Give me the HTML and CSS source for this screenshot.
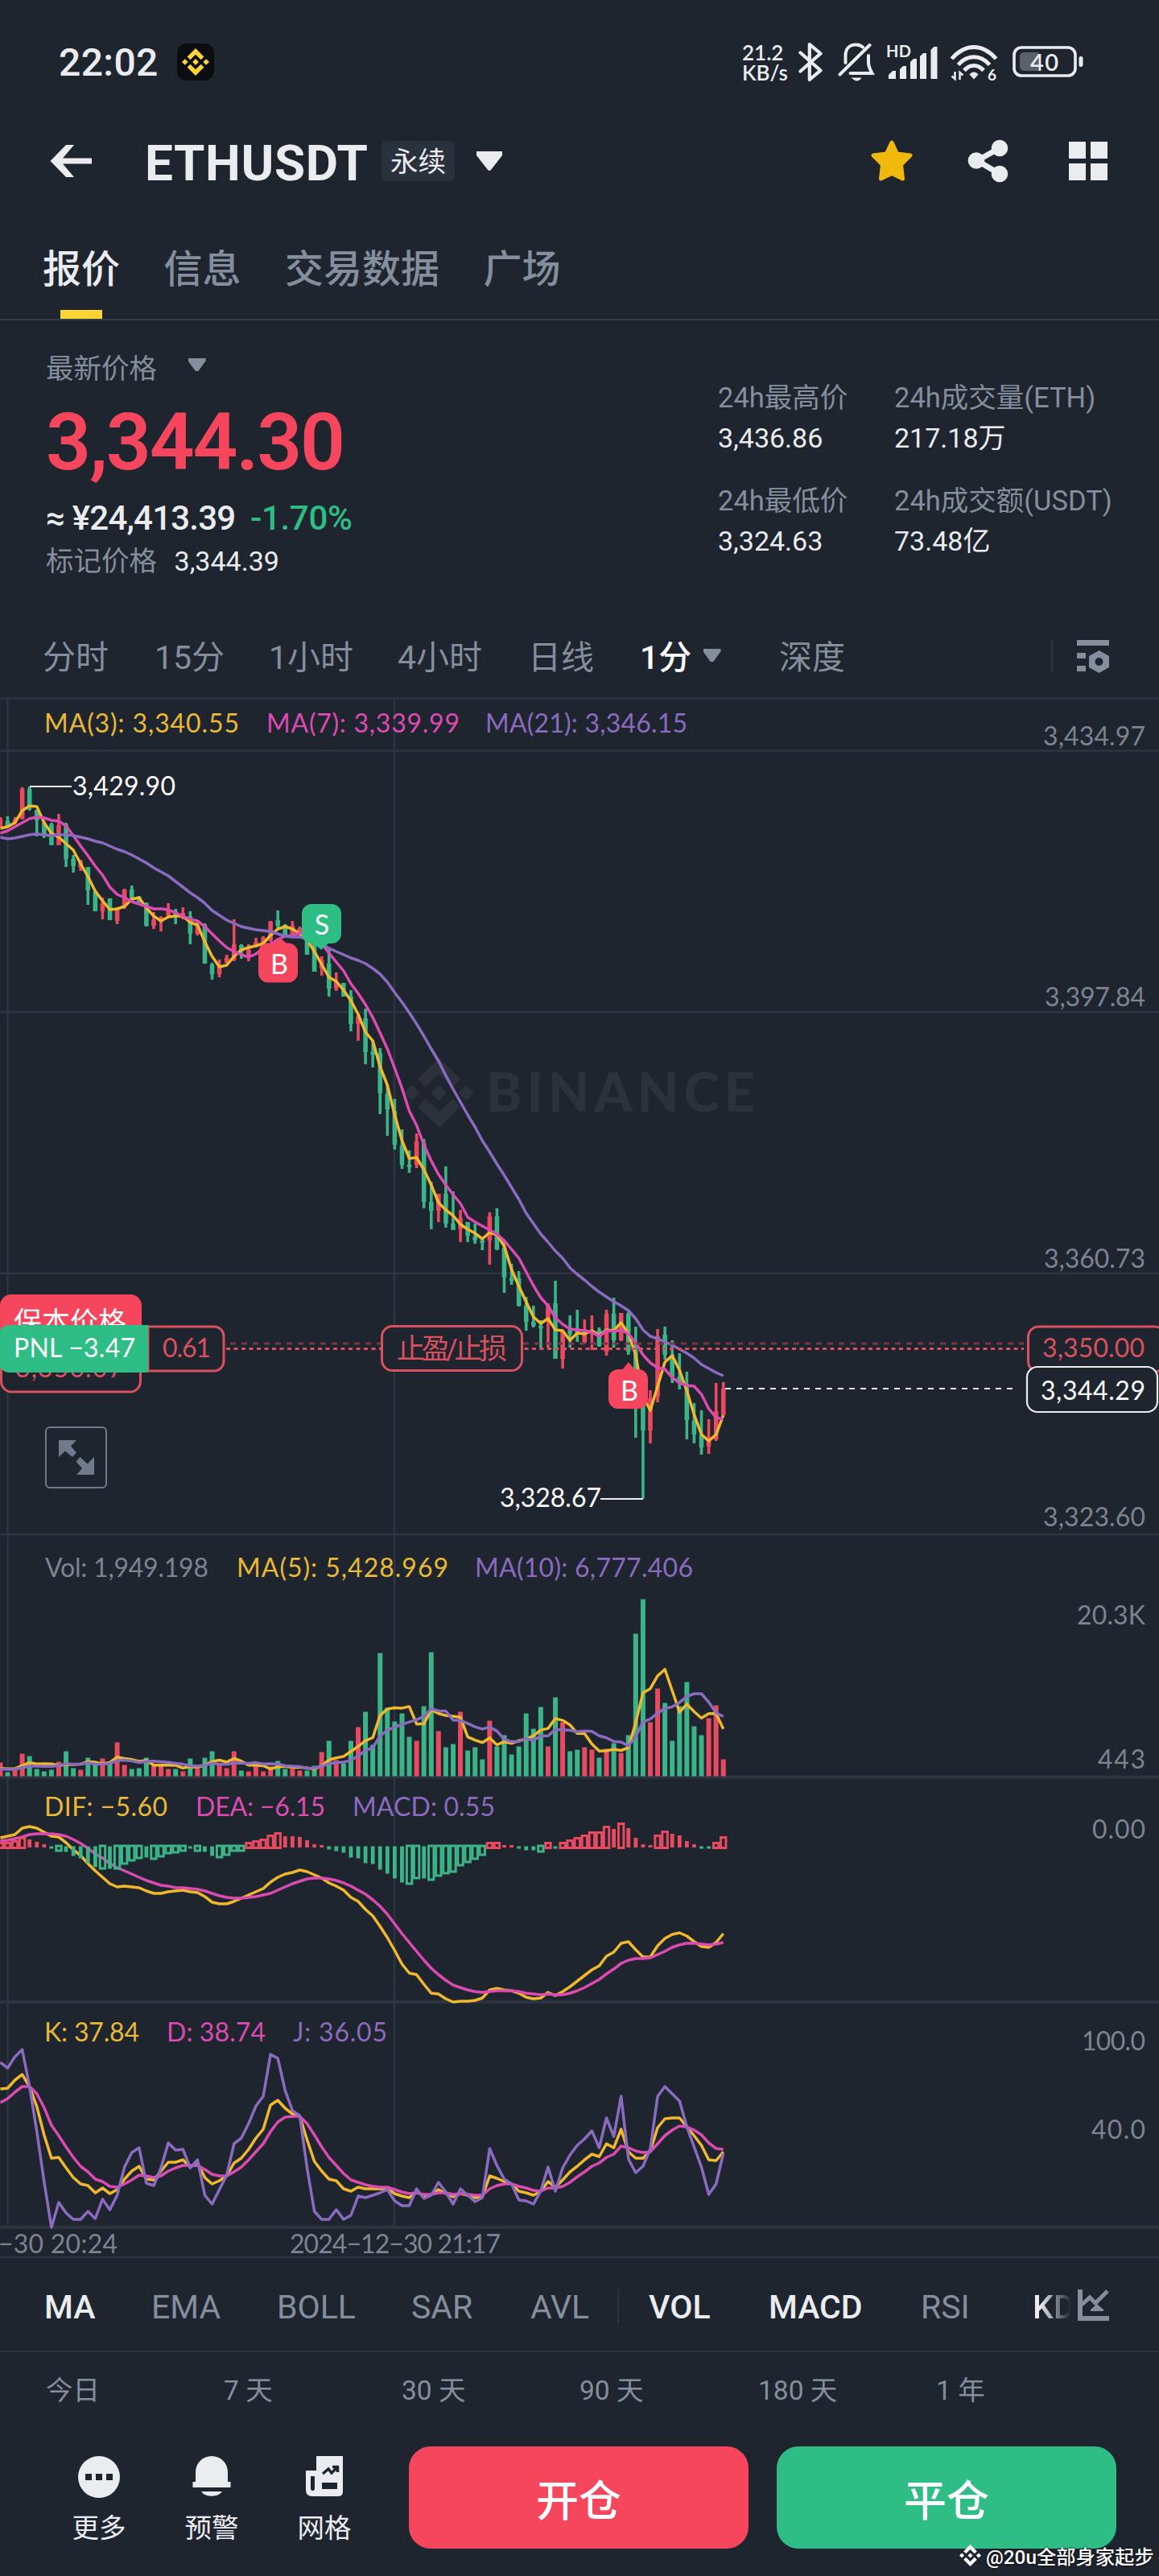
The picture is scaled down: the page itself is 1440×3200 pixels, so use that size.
FILE: index.html
```
<!DOCTYPE html>
<html lang="zh-CN">
<head>
    <meta charset="UTF-8">
    <title>ETHUSDT 永续</title>
    <link rel="stylesheet" href="styles.css">
</head>
<body>
    <!-- shared logo -->
    <svg class="defs" width="0" height="0">
        <symbol id="logo" viewBox="0 0 126.6 126.6">
            <path d="M38.7 53.2 63.3 28.6l24.6 24.6 14.3-14.3L63.3 0 24.4 38.9zM0 63.3 14.3 49l14.3 14.3-14.3 14.3zM38.7 73.4 63.3 98l24.6-24.6 14.3 14.3-38.9 38.9-38.9-38.9zM98 63.3 112.3 49l14.3 14.3-14.3 14.3zM77.8 63.3 63.3 48.8 48.8 63.3l14.5 14.5z"/>
        </symbol>
    </svg>

    <div class="status">
        <span class="clock">22:02</span>
        <span class="app"><svg width="34" height="34"><use href="#logo"/></svg></span>
        <span class="speed">21.2<br>KB/s</span>
        <svg class="bt" width="30" height="50" viewBox="0 0 30 50" fill="none" stroke="#eaecef" stroke-width="4.2" stroke-linecap="round" stroke-linejoin="round">
            <path d="M2.5 13.5 27.5 35.5 13.8 47V3l13.7 11.5L2.5 36.5"/>
        </svg>
        <svg class="mute" width="46" height="50" viewBox="0 0 46 50" fill="none" stroke="#eaecef" stroke-width="4" stroke-linecap="round">
            <path d="M2.5 40.5 39.5 4M9.5 26V17C9.500 8 15 3.500 22.500 3.500 26 3.500 28.500 4.500 31 6.500M38 17v8.500c0 5 1.500 8 4.500 13.500H15.500"/>
            <path d="M18 45h11c-1.500 2-3.500 3-5.500 3s-4-1-5.500-3z" fill="#eaecef" stroke-width="1"/>
        </svg>
        <svg class="signal" width="66" height="50" viewBox="0 -4 66 50" fill="#eaecef">
            <text x="0" y="15" font-size="20" font-weight="700" textLength="31">HD</text>
            <path d="M3 42v-5l5-5h4v10zM17 42V30l4-4h4v16zM30 42V21l4-4h4v25zM42 42V14l4-4h4v32zM55.500 42V6l4-4h4v40z"/>
        </svg>
        <svg class="wifi" width="62" height="48" viewBox="0 0 62 48" fill="none" stroke="#eaecef" stroke-width="5">
            <path d="M2.500 18C19-1.500 41-1.500 57.500 18M10.500 25.500C21.500 12.500 38.500 12.500 49.500 25.500M18 32.500c7-8 17-8 24 0"/>
            <path d="M24.500 37.500c3-4 8-4 11 0L30 43.500z" fill="#eaecef" stroke="none"/>
            <path d="M6.500 34v9l-4-3.500M12.500 44v-9l4 3.500" stroke-width="2.500"/>
            <text x="47" y="45" font-size="19" font-weight="700" fill="#eaecef" stroke="none">6</text>
        </svg>
        <svg class="battery" width="90" height="40" viewBox="0 0 90 40">
            <rect x="2" y="2" width="76" height="35" rx="9" fill="none" stroke="#eaecef" stroke-width="3.600"/>
            <path d="M14 8h18v23H14a5 5 0 0 1-5-5V13a5 5 0 0 1 5-5z" fill="#5c6068"/>
            <rect x="82.500" y="13" width="5" height="13" rx="2.500" fill="#eaecef"/>
            <text x="22" y="31" font-size="29" font-weight="600" fill="#eaecef" textLength="35">40</text>
        </svg>
    </div>

    <div class="title">
        <svg width="54" height="44" viewBox="0 0 54 44" fill="#eaecef"><path d="M21 2h10L17 18.500h36v7H17L31 42H21L1.500 22z"/></svg>
        <h1>ETHUSDT</h1>
        <span class="tag">永续</span>
        <svg class="caret" width="34" height="26" viewBox="0 0 34 26"><path d="M1 1h32v5L19 24q-2 2-4 0L1 6z" fill="#eaecef"/></svg>
        <svg class="star" width="54" height="54" viewBox="0 0 54 54"><path d="m27 4 6.500 14 16.500 2-11.500 11.500 2 17.500L27 42.500 13.500 49l2-17.500L4 20l16.500-2z" fill="#f0b90b" stroke="#f0b90b" stroke-width="5" stroke-linejoin="round"/></svg>
        <svg class="share" width="52" height="54" viewBox="0 0 52 54"><path d="M40 11 12 26.500 40 43" fill="none" stroke="#eaecef" stroke-width="7"/><g fill="#eaecef"><circle cx="40" cy="11" r="10.300"/><circle cx="11" cy="26.500" r="10.300"/><circle cx="40" cy="43" r="10.300"/></g></svg>
        <svg width="48" height="48" viewBox="0 0 48 48"><path d="M0 0h21v21H0zM27 0h21v21H27zM0 27h21v21H0zM27 27h21v21H27z" fill="#eaecef"/></svg>
    </div>

    <div class="tabs">
        <span class="active">报价</span>
        <span>信息</span>
        <span>交易数据</span>
        <span>广场</span>
    </div>

    <div class="ticker">
        <div class="price">
            <div class="label">最新价格 <i class="tri"></i></div>
            <div class="last">3,344.30</div>
            <div class="fiat">≈ ¥24,413.39 <b>-1.70%</b></div>
            <div class="mark">标记价格 <b>3,344.39</b></div>
        </div>
        <div class="stats">
            <div><p>24h最高价</p><b>3,436.86</b></div>
            <div><p>24h成交量(ETH)</p><b>217.18万</b></div>
            <div><p>24h最低价</p><b>3,324.63</b></div>
            <div><p>24h成交额(USDT)</p><b>73.48亿</b></div>
        </div>
    </div>

    <div class="intervals">
        <span>分时</span>
        <span>15分</span>
        <span>1小时</span>
        <span>4小时</span>
        <span>日线</span>
        <span class="active">1分 <i class="tri"></i></span>
        <span>深度</span>
        <svg width="74" height="44" viewBox="0 0 74 44" fill="#848e9c">
            <path d="M1 1h2v42H1z" fill="#2f3640"/>
            <path d="M33 2h40v7H33zM33 18h11v7H33zM33 34h11v7H33z"/>
            <path fill-rule="evenodd" d="m60.500 15 12.500 7v14l-12.500 7L48 36V22zm0 9a5 5 0 1 0 0 10 5 5 0 0 0 0-10z"/>
        </svg>
    </div>

    <svg id="chart" class="chart" width="1440" height="1940" viewBox="0 866 1440 1940">
        <g class="watermark">
            <use href="#logo" x="502" y="1314" width="87" height="87"/>
            <text x="604" y="1381" textLength="334">BINANCE</text>
        </g>
        <g class="grid">
            <path d="M0 867.500H1440M0 932.700H1440M0 1257.300H1440M0 1581.700H1440M0 1906H1440M9.500 867V2766M490 867V2766M0 2804H1440"/>
            <path d="M0 2207.500H1440M0 2486.700H1440M0 2766.700H1440" stroke-width="4"/>
        </g>
        <g id="plot"></g>

        <g class="legend">
            <text class="c1" x="55" y="909.500" textLength="242">MA(3): 3,340.55</text>
            <text class="c2" x="331" y="909.500" textLength="240">MA(7): 3,339.99</text>
            <text class="c3" x="603" y="909.500" textLength="251">MA(21): 3,346.15</text>
            <text class="dim" x="56" y="1959" textLength="203">Vol: 1,949.198</text>
            <text class="c1" x="294" y="1959" textLength="263">MA(5): 5,428.969</text>
            <text class="c3" x="590" y="1959" textLength="271">MA(10): 6,777.406</text>
            <text class="c1" x="55" y="2256" textLength="153">DIF: −5.60</text>
            <text class="c2" x="243" y="2256" textLength="161">DEA: −6.15</text>
            <text class="c3" x="438" y="2256" textLength="177">MACD: 0.55</text>
            <text class="c1" x="55" y="2536" textLength="118">K: 37.84</text>
            <text class="c2" x="207" y="2536" textLength="123">D: 38.74</text>
            <text class="c3" x="364" y="2536" textLength="117">J: 36.05</text>
        </g>
        <g class="axis">
            <text x="1296" y="926" textLength="127">3,434.97</text>
            <text x="1298" y="1250" textLength="125">3,397.84</text>
            <text x="1297" y="1575" textLength="126">3,360.73</text>
            <text x="1296" y="1896" textLength="127">3,323.60</text>
            <text x="1338" y="2018" textLength="85">20.3K</text>
            <text x="1364" y="2197" textLength="59">443</text>
            <text x="1357" y="2284" textLength="66">0.00</text>
            <text x="1344" y="2547" textLength="79">100.0</text>
            <text x="1356" y="2657" textLength="67">40.0</text>
            <text x="-2" y="2799" textLength="148">−30 20:24</text>
            <text x="360" y="2799" textLength="262">2024−12−30 21:17</text>
        </g>

        <path d="M37 977H89M746 1862H799" stroke="#eaecef" stroke-width="2"/>
        <text class="white" x="90" y="988" textLength="128">3,429.90</text>
        <text class="white" x="621" y="1872" textLength="126">3,328.67</text>

        <!-- order lines -->
        <path d="M286 1669H1272" stroke="#7a3743" stroke-width="3" stroke-dasharray="7 7"/>
        <path d="M281 1675.500H1272" stroke="#d9515f" stroke-width="3" stroke-dasharray="5 4.500"/>
        <path d="M901 1725H1262" stroke="#eaecef" stroke-width="2" stroke-dasharray="7 7"/>

        <!-- trade marks -->
        <path d="M348 1165l9 8h-18zM781 1692l10 12h-20z" fill="#f6465d"/>
        <rect x="321" y="1171.500" width="49" height="49" rx="12" fill="#f6465d"/>
        <rect x="756" y="1701" width="49" height="49" rx="12" fill="#f6465d"/>
        <path d="M399 1180l10-9h-20z" fill="#2ebd85"/>
        <rect x="375" y="1123" width="49" height="49" rx="12" fill="#2ebd85"/>
        <g class="mark-text">
            <text x="347" y="1210">B</text>
            <text x="782" y="1740">B</text>
            <text x="400" y="1161">S</text>
        </g>

        <!-- position tags -->
        <rect x="1.500" y="1660" width="173" height="69" rx="13" fill="#1f252f" stroke="#d9515f" stroke-width="3"/>
        <text class="red" x="19" y="1711" textLength="134">3,350.07</text>
        <path d="M0 1670V1622a14 14 0 0 1 14-14H162a14 14 0 0 1 14 14V1670z" fill="#f6465d"/>
        <text class="white cjk" x="17" y="1655">保本价格</text>
        <path d="M184 1648H266a12 12 0 0 1 12 12V1691a12 12 0 0 1-12 12H184z" fill="#1f252f" stroke="#d9515f" stroke-width="3"/>
        <path d="M184 1646V1705H12a14 14 0 0 1-14-14V1660a14 14 0 0 1 14-14z" fill="#2ebd85"/>
        <text class="white" x="17" y="1686" textLength="151">PNL −3.47</text>
        <text class="red" x="202" y="1686" textLength="60">0.61</text>
        <rect x="474.500" y="1647.500" width="174" height="55" rx="13" fill="#1f252f" stroke="#d9515f" stroke-width="3"/>
        <text class="red cjk" x="493" y="1688" textLength="137">止盈/止损</text>
        <rect x="1277.500" y="1648" width="170" height="56" rx="13" fill="#1f252f" stroke="#d9515f" stroke-width="3"/>
        <text class="red" x="1295" y="1686" textLength="127">3,350.00</text>
        <rect x="1276" y="1698" width="162" height="56" rx="13" fill="#1f252f" stroke="#eaecef" stroke-width="2.200"/>
        <text class="white" x="1293" y="1739" textLength="130">3,344.29</text>

        <!-- fullscreen button -->
        <rect x="57" y="1773" width="75" height="75" rx="5" fill="#1f252f" stroke="#707a8a" stroke-width="2"/>
        <path d="M73 1789H95L88 1796.500 95 1804.500 90 1810 81 1802.500 73 1810zM117 1832H95L102 1824 94.500 1815.500 99.500 1810 108.500 1818.500 117 1810z" fill="#707a8a"/>
    </svg>

    <div class="indicators">
        <span class="active">MA</span>
        <span>EMA</span>
        <span>BOLL</span>
        <span>SAR</span>
        <span>AVL</span>
        <span class="active vol">VOL</span>
        <span class="active">MACD</span>
        <span>RSI</span>
        <span class="active kdj">KDJ</span>
        <svg width="40" height="40" viewBox="0 0 40 40" fill="none" stroke="#848e9c">
            <path d="M3 0v36h36" stroke-width="6"/>
            <path d="m5 19 10-9 7 7L37 2" stroke-width="5"/>
            <path d="m16 25 8-7 8 7v2H16z" fill="#848e9c" stroke="none"/>
        </svg>
    </div>

    <div class="ranges">
        <span>今日</span>
        <span>7 天</span>
        <span>30 天</span>
        <span>90 天</span>
        <span>180 天</span>
        <span>1 年</span>
    </div>

    <div class="actions">
        <div class="tool">
            <svg width="54" height="54" viewBox="0 0 54 54"><circle cx="27" cy="27" r="26" fill="#eaecef"/><path d="M10 23h8v8h-8zM23 23h8v8h-8zM36 23h8v8h-8z" fill="#1f252f"/></svg>
            更多
        </div>
        <div class="tool">
            <svg width="54" height="54" viewBox="0 0 54 54" fill="#eaecef"><path d="M7 21a20 20 0 0 1 40 0v12l3.500 0v7h-47v-7H7zM14 45h26a14 9 0 0 1-26 0z"/></svg>
            预警
        </div>
        <div class="tool">
            <svg width="54" height="54" viewBox="0 0 54 54"><path d="M17 1h33v44q0 6-6 6H12q-8 0-8-8V19h13z" fill="#eaecef"/><path d="M10 26h5v15q0 3-2.500 3T10 41zM24 34h19v8H24z" fill="#1f252f"/><path d="m25 23 7-6 4 5 8-8M37 14.500h6.500V21" fill="none" stroke="#1f252f" stroke-width="3.500"/></svg>
            网格
        </div>
        <button class="open">开仓</button>
        <button class="close">平仓</button>
        <div class="credit"><svg width="27" height="27"><use href="#logo"/></svg>@20u全部身家起步</div>
    </div>
    <script src="chart.js"></script>
</body>
</html>
```
FILE: styles.css
```
* {
    box-sizing: border-box;
}

body {
    margin: 0;
    width: 1440px;
    height: 3200px;
    overflow: hidden;
    background: #1f252f;
    color: #eaecef;
    font-family: Roboto, "Noto Sans CJK SC", sans-serif;
}

svg {
    display: block;
    flex: none;
}

.defs {
    position: absolute;
}

/* status bar */
.status {
    display: flex;
    align-items: center;
    height: 154px;
    padding-left: 73px;
}

.status text {
    font-family: Lato, sans-serif;
}

.clock {
    width: 147px;
    font-size: 48px;
    font-weight: 500;
    letter-spacing: 0.4px;
}

.app {
    display: flex;
    align-items: center;
    justify-content: center;
    width: 46px;
    height: 46px;
    border-radius: 12px;
    background: #0b0d10;
    fill: #fcd535;
}

.speed {
    width: 68px;
    margin: 2px 0 0 656px;
    font: 600 26px/25px Lato, sans-serif;
    white-space: nowrap;
}

.bt {
    margin-left: 2px;
}

.mute {
    margin-left: 19px;
}

.signal {
    margin-left: 14px;
    margin-top: 0;
}

.wifi {
    margin-left: 13px;
    margin-top: 3px;
}

.battery {
    margin-left: 16px;
}

/* pair title */
.title {
    display: flex;
    align-items: center;
    height: 92px;
    padding: 0 64px 0 61px;
}

.title h1 {
    margin: 6px 0 0 65px;
    width: 294px;
    font-size: 62px;
    font-weight: 700;
    line-height: 80px;
    letter-spacing: 0.6px;
}

.tag {
    width: 91px;
    height: 50px;
    border-radius: 6px;
    background: #29313c;
    font-size: 34.500px;
    line-height: 52px;
    text-align: center;
}

.caret {
    margin-left: 26px;
}

.star {
    margin-left: auto;
}

.share {
    margin: 0 74px 0 67px;
}

.tabs {
    display: flex;
    gap: 54.500px;
    height: 152px;
    padding: 60px 53px 0;
    border-bottom: 2px solid #333b47;
    color: #848e9c;
    font-size: 48px;
    font-weight: 500;
    line-height: 58px;
}

.tabs .active {
    position: relative;
    color: #eaecef;
}

.tabs .active::after {
    content: "";
    position: absolute;
    left: 22px;
    bottom: 0;
    width: 52px;
    height: 11px;
    background: #fcd535;
}

.tri {
    display: inline-block;
    width: 22px;
    height: 16px;
    background: #848e9c;
    clip-path: polygon(0 0, 100% 0, 100% 20%, 58% 100%, 42% 100%, 0 20%);
}

/* prices */
.ticker {
    display: flex;
    justify-content: space-between;
    height: 354px;
    padding: 0 0 0 57px;
    color: #848e9c;
    font-size: 34.500px;
}

.ticker b {
    color: #eaecef;
    font-weight: 400;
}

.label {
    margin-top: 34px;
    height: 52px;
    line-height: 52px;
}

.label .tri {
    margin: 0 0 9px 30px;
}

.last {
    height: 130px;
    color: #f6465d;
    font-size: 98px;
    font-weight: 600;
    line-height: 132px;
    letter-spacing: -2.100px;
}

.fiat {
    height: 56px;
    color: #eaecef;
    font-size: 42px;
    font-weight: 500;
    line-height: 60px;
    letter-spacing: -0.800px;
}

.ticker .fiat b {
    margin-left: 9px;
    color: #2ebd85;
    font-weight: 500;
    letter-spacing: -0.300px;
}

.mark {
    line-height: 54px;
}

.mark b {
    margin-left: 13px;
    font-size: 34px;
}

.stats {
    display: grid;
    grid-template-columns: 219px 329px;
    grid-template-rows: 128px 128px;
    margin-top: 70px;
}

.stats p {
    margin: 0;
    line-height: 52px;
    white-space: nowrap;
}

.stats b {
    font-size: 34px;
    line-height: 48px;
}

.intervals {
    display: grid;
    grid-template-columns: 139px 142px 160px 162px 139px 173px 335px 74px;
    align-items: center;
    height: 114px;
    padding: 16px 0 0 53px;
    color: #848e9c;
    font-size: 41px;
    line-height: 60px;
}

.intervals svg {
    margin: -4px 0 0 2px;
}

.intervals .active {
    color: #fff;
    font-weight: 500;
}

.intervals .tri {
    margin: 0 0 9px 4px;
}

/* chart */
.chart {
    font-family: Lato, sans-serif;
    font-size: 32px;
}

.grid path {
    fill: none;
    stroke: #2e3540;
}

.grid path:first-child {
    stroke-width: 2.500;
}

.watermark {
    fill: #2c313c;
    font-size: 67px;
    font-weight: 900;
}

.up { fill: #e94a5f; }
.down { fill: #3bb488; }

.hollow {
    fill: none;
    stroke-width: 3;
}

.hollow.up { stroke: #e94a5f; }
.hollow.down { stroke: #3bb488; }

.line {
    fill: none;
    stroke-width: 3.500;
    stroke-linejoin: round;
}

.line.c1 { stroke: #f0b92d; }
.line.c2 { stroke: #dc4bb2; }
.line.c3 { stroke: #8a6bbf; }

.legend .c1 { fill: #e8b936; }
.legend .c2 { fill: #dc4bb2; }
.legend .c3 { fill: #8a6bbf; }
.legend .dim,
.axis { fill: #7d8390; }

.white { fill: #fff; }
.red { fill: #d9515f; }

.cjk {
    font-family: Roboto, "Noto Sans CJK SC", sans-serif;
    font-size: 35px;
}

.mark-text {
    fill: #fff;
    font-size: 34px;
    text-anchor: middle;
}

/* indicator picker */
.indicators {
    display: grid;
    grid-template-columns: 133px 156px 167px 148px 147px 149px 189px 139px 55px 40px;
    align-items: center;
    height: 116px;
    padding: 6px 0 0 55px;
    border-bottom: 2px solid #2c343f;
    color: #848e9c;
    font-size: 41px;
}

.indicators svg {
    margin: -4px 0 0 1px;
}

.indicators .active {
    color: #eaecef;
    font-weight: 500;
}

.vol {
    position: relative;
}

.vol::before {
    content: "";
    position: absolute;
    left: -39px;
    top: 2px;
    width: 2px;
    height: 42px;
    background: #2c343f;
}

.kdj {
    width: 48px;
    overflow: hidden;
    -webkit-mask-image: linear-gradient(90deg, #000 20%, transparent);
    mask-image: linear-gradient(90deg, #000 20%, transparent);
}

.ranges {
    display: grid;
    grid-template-columns: 221px 221px 221px 222px 221px auto;
    height: 98px;
    padding-left: 57px;
    color: #848e9c;
    font-size: 33.500px;
    line-height: 96px;
}

/* bottom bar */
.actions {
    position: relative;
    display: flex;
    align-items: flex-start;
    height: 180px;
    padding: 19px 0 0 53px;
}

.tool {
    display: flex;
    flex-direction: column;
    align-items: center;
    gap: 12px;
    width: 140px;
    padding-top: 11px;
    font-size: 33.500px;
    line-height: 50px;
}

.actions button {
    width: 422px;
    height: 127px;
    margin-left: 35px;
    border: 0;
    border-radius: 27px;
    color: #fff;
    font: 500 53px/130px Roboto, "Noto Sans CJK SC", sans-serif;
    padding: 4px 0 0;
}

.open { background: #f6465d; }
.actions .close { background: #2ebd85; }

.credit {
    position: absolute;
    left: 1192px;
    top: 137px;
    display: flex;
    align-items: center;
    gap: 6px;
    color: #fff;
    fill: #fff;
    font-size: 24.300px;
    font-weight: 500;
    white-space: nowrap;
    text-shadow: 0 0 3px #000;
}
```
FILE: chart.js
```
const STEP = 9.074;
const plot = document.getElementById("plot");
const xAt = (i) => 0.4 + i * STEP;

// colour, high, body top, body bottom, low (svg units)
const candles = `
r 1015 1017 1027 1027,g 1014 1020 1027 1027,r 1015 1018 1022 1024,r 978 980 1017 1018,g 977 980 1005 1007,
g 1006 1006 1019 1039,g 1020 1022 1039 1041,g 1022 1024 1050 1050,r 1011 1025 1050 1050,g 1022 1024 1067 1077,
g 1062 1067 1076 1084,r 1068 1070 1078 1082,g 1077 1077 1106 1124,g 1107 1107 1132 1132,r 1115 1122 1132 1142,
g 1116 1116 1143 1143,r 1127 1129 1144 1148,r 1104 1105 1125 1129,g 1100 1105 1116 1118,g 1113 1114 1121 1121,
g 1121 1122 1150 1151,r 1133 1143 1150 1154,r 1138 1140 1145 1157,r 1122 1130 1137 1138,g 1129 1132 1138 1148,
r 1127 1134 1140 1142,g 1132 1138 1160 1173,r 1145 1150 1160 1162,g 1147 1149 1197 1197,g 1196 1198 1210 1217,
r 1192 1199 1210 1214,r 1186 1190 1196 1197,r 1142 1173 1192 1194,g 1173 1174 1182 1191,r 1173 1180 1188 1194,
r 1165 1170 1176 1177,r 1163 1165 1172 1173,r 1144 1145 1168 1170,g 1131 1143 1150 1153,g 1148 1149 1163 1163,
r 1144 1150 1160 1162,r 1151 1153 1160 1160,g 1162 1164 1186 1186,g 1168 1170 1207 1207,r 1188 1193 1203 1212,
g 1180 1197 1228 1238,r 1208 1220 1228 1231,g 1221 1221 1238 1238,g 1230 1238 1272 1281,r 1260 1263 1272 1293,
g 1253 1265 1307 1322,g 1293 1307 1310 1326,g 1302 1308 1358 1384,g 1347 1359 1378 1411,g 1365 1380 1422 1428,
g 1403 1423 1447 1452,g 1429 1447 1450 1457,r 1408 1418 1447 1451,g 1415 1420 1493 1501,g 1468 1493 1504 1527,
r 1483 1483 1504 1518,g 1449 1483 1520 1525,g 1480 1520 1528 1528,r 1503 1513 1527 1543,g 1518 1518 1535 1543,
g 1520 1536 1541 1545,g 1538 1541 1544 1553,r 1506 1511 1541 1571,g 1501 1511 1552 1553,g 1543 1550 1587 1606,
g 1570 1588 1591 1596,g 1579 1588 1622 1623,g 1611 1622 1642 1653,g 1622 1642 1647 1649,g 1640 1647 1650 1675,
r 1619 1622 1640 1674,g 1591 1619 1688 1688,r 1652 1654 1688 1700,g 1634 1652 1657 1674,g 1627 1653 1657 1667,
r 1639 1655 1667 1669,r 1634 1653 1657 1677,g 1649 1652 1672 1673,r 1627 1632 1679 1684,g 1612 1632 1665 1674,
r 1631 1631 1665 1666,g 1630 1632 1679 1683,g 1648 1677 1747 1786,g 1710 1713 1777 1862,r 1727 1737 1777 1793,
r 1651 1660 1735 1742,g 1648 1658 1683 1689,g 1665 1683 1710 1718,g 1681 1710 1717 1726,g 1704 1722 1764 1788,
g 1743 1765 1782 1793,g 1752 1782 1798 1807,r 1763 1785 1797 1806,r 1718 1753 1788 1790,r 1717 1725 1758 1758
`.trim().split(",").map((row) => {
    const [color, ...v] = row.trim().split(" ");
    return [color === "r" ? "up" : "down", ...v.map(Number)];
});

const volumes = [
    17, 5, 9, 28, 25, 9, 6, 8, 18, 31, 10, 8, 23, 15, 22, 17, 42, 14, 9, 10, 23, 13, 14, 9, 9,
    6, 22, 9, 23, 31, 15, 10, 31, 7, 6, 15, 6, 12, 19, 9, 9, 7, 7, 13, 30, 44, 20, 16, 44, 61,
    80, 39, 153, 85, 68, 78, 49, 44, 87, 154, 56, 36, 40, 80, 32, 36, 21, 69, 37, 51, 27, 37, 78, 59, 86,
    37, 98, 67, 31, 33, 36, 33, 23, 34, 41, 29, 51, 177, 220, 67, 109, 91, 44, 87, 117, 62, 51, 72, 88, 21
];

const macd = [
    5, 5, 7, 11, 10, 7, 4, -3, -5, -7, -12, -15, -21, -26, -27, -28, -27, -21, -17, -14, -14, -15, -12, -8, -7,
    -5, -3, -5, -7, -12, -13, -10, -5, -5, 5, 7, 9, 14, 17, 14, 14, 13, 9, 4, 3, -4, -6, -8, -14, -15,
    -21, -22, -29, -34, -40, -45, -46, -39, -40, -41, -36, -33, -31, -23, -19, -15, -10, 5, 5, 3, 3, -3, -5, -5, -6,
    5, -3, 5, 8, 11, 14, 18, 18, 25, 23, 29, 24, 12, 4, 3, 14, 19, 17, 15, 8, 4, -3, -3, 5, 12
];
// H = hollow bar, F = filled bar
const macdStyle = "HHHHFFFFHFFFFFHFHHHHFHHHHHFHFFHHHHHHHHHFFFFFFFFFFFFFFFFFHHFHHHHHHHHHHFFFFFHHFHHHHHHHFHFFFFHHFFFFFFHH";

const ma3 = [
    1029, 1027, 1022, 1007, 1001, 1002, 1022, 1035, 1040, 1048, 1056, 1073, 1089, 1107, 1119, 1130, 1129, 1126, 1117, 1115, 1128, 1138, 1144, 1139, 1138,
    1138, 1146, 1149, 1170, 1188, 1201, 1199, 1188, 1180, 1177, 1175, 1172, 1162, 1154, 1151, 1154, 1160, 1167, 1182, 1198, 1214, 1219, 1230, 1243, 1260,
    1282, 1293, 1325, 1348, 1385, 1417, 1439, 1438, 1453, 1472, 1494, 1503, 1510, 1521, 1527, 1532, 1539, 1531, 1534, 1548, 1577, 1598, 1617, 1636, 1644,
    1638, 1652, 1653, 1665, 1656, 1657, 1653, 1659, 1652, 1653, 1643, 1657, 1683, 1735, 1752, 1722, 1692, 1684, 1702, 1728, 1757, 1782, 1790, 1782, 1758
];
const ma7 = [
    1035, 1032, 1027, 1022, 1017, 1015, 1016, 1019, 1020, 1026, 1038, 1051, 1063, 1076, 1087, 1102, 1111, 1115, 1120, 1123, 1126, 1129, 1129, 1130, 1134,
    1138, 1142, 1144, 1151, 1160, 1169, 1177, 1182, 1186, 1189, 1185, 1178, 1173, 1167, 1163, 1162, 1159, 1159, 1163, 1172, 1184, 1195, 1206, 1222, 1234,
    1248, 1264, 1283, 1303, 1327, 1352, 1380, 1398, 1422, 1442, 1459, 1472, 1484, 1495, 1512, 1518, 1523, 1528, 1533, 1541, 1552, 1563, 1580, 1597, 1612,
    1622, 1637, 1645, 1651, 1652, 1653, 1655, 1660, 1653, 1654, 1652, 1657, 1668, 1683, 1693, 1699, 1701, 1711, 1718, 1721, 1722, 1732, 1750, 1761, 1763
];
const ma21 = [
    1040, 1042, 1041, 1039, 1037, 1036, 1037, 1038, 1037, 1037, 1038, 1040, 1042, 1045, 1047, 1051, 1055, 1058, 1062, 1067, 1072, 1078, 1083, 1088, 1095,
    1102, 1109, 1115, 1122, 1131, 1137, 1143, 1147, 1151, 1153, 1155, 1156, 1157, 1160, 1163, 1164, 1164, 1166, 1169, 1173, 1178, 1182, 1186, 1190, 1193,
    1197, 1203, 1210, 1220, 1233, 1245, 1258, 1272, 1287, 1303, 1318, 1336, 1353, 1369, 1385, 1400, 1417, 1431, 1446, 1460, 1475, 1490, 1507, 1520, 1533,
    1543, 1554, 1563, 1575, 1583, 1590, 1598, 1605, 1611, 1617, 1622, 1628, 1638, 1652, 1660, 1663, 1667, 1671, 1676, 1681, 1687, 1695, 1700, 1705, 1709
];
const dif = [
    2283, 2281, 2279, 2271, 2269, 2271, 2276, 2281, 2282, 2289, 2298, 2305, 2315, 2324, 2332, 2340, 2344, 2343, 2344, 2345, 2349, 2352, 2352, 2350, 2349,
    2348, 2350, 2351, 2356, 2363, 2365, 2365, 2362, 2358, 2354, 2350, 2346, 2338, 2332, 2328, 2326, 2323, 2325, 2329, 2333, 2339, 2343, 2348, 2357, 2362,
    2372, 2380, 2393, 2407, 2423, 2440, 2451, 2453, 2465, 2476, 2477, 2483, 2487, 2486, 2486, 2485, 2482, 2472, 2470, 2472, 2473, 2476, 2481, 2483, 2482,
    2475, 2479, 2474, 2468, 2461, 2454, 2447, 2442, 2430, 2425, 2414, 2412, 2422, 2431, 2431, 2417, 2408, 2403, 2401, 2405, 2412, 2418, 2419, 2413, 2402
];
const dea = [
    2287, 2286, 2284, 2282, 2279, 2278, 2278, 2278, 2279, 2281, 2285, 2290, 2296, 2303, 2308, 2315, 2320, 2324, 2328, 2332, 2336, 2339, 2342, 2343, 2345,
    2345, 2346, 2347, 2349, 2352, 2355, 2357, 2358, 2358, 2357, 2356, 2354, 2352, 2348, 2344, 2340, 2337, 2334, 2333, 2333, 2334, 2336, 2339, 2343, 2348,
    2353, 2360, 2368, 2378, 2390, 2402, 2413, 2424, 2435, 2445, 2453, 2460, 2466, 2469, 2472, 2474, 2475, 2474, 2473, 2473, 2473, 2474, 2476, 2477, 2478,
    2477, 2478, 2478, 2476, 2473, 2469, 2464, 2459, 2452, 2446, 2439, 2435, 2433, 2433, 2432, 2428, 2424, 2419, 2416, 2414, 2414, 2415, 2416, 2415, 2413
];
const k = [
    2595, 2594, 2584, 2577, 2592, 2617, 2652, 2681, 2680, 2693, 2705, 2713, 2715, 2724, 2718, 2725, 2720, 2707, 2697, 2691, 2707, 2708, 2697, 2686, 2686,
    2683, 2692, 2687, 2705, 2713, 2709, 2703, 2687, 2681, 2670, 2656, 2645, 2615, 2609, 2619, 2626, 2629, 2658, 2685, 2697, 2707, 2709, 2719, 2722, 2717,
    2719, 2719, 2719, 2719, 2725, 2728, 2730, 2723, 2728, 2726, 2720, 2725, 2729, 2725, 2727, 2730, 2729, 2703, 2706, 2710, 2713, 2722, 2724, 2727, 2722,
    2710, 2717, 2708, 2698, 2691, 2683, 2676, 2679, 2663, 2668, 2645, 2673, 2681, 2681, 2672, 2643, 2632, 2631, 2631, 2642, 2653, 2665, 2683, 2684, 2673
];
const d = [
    2612, 2607, 2599, 2592, 2592, 2601, 2618, 2640, 2653, 2667, 2680, 2691, 2698, 2707, 2710, 2716, 2717, 2713, 2708, 2702, 2703, 2705, 2703, 2697, 2693,
    2690, 2690, 2690, 2695, 2701, 2703, 2703, 2698, 2692, 2683, 2673, 2663, 2648, 2636, 2630, 2629, 2629, 2638, 2652, 2667, 2680, 2690, 2700, 2708, 2711,
    2714, 2716, 2717, 2717, 2720, 2723, 2725, 2724, 2726, 2726, 2724, 2724, 2726, 2725, 2726, 2727, 2727, 2719, 2715, 2713, 2713, 2716, 2718, 2721, 2722,
    2718, 2718, 2716, 2711, 2704, 2698, 2691, 2687, 2680, 2676, 2666, 2668, 2672, 2674, 2673, 2663, 2653, 2646, 2641, 2642, 2646, 2652, 2662, 2669, 2670
];
const j = [
    2562, 2569, 2555, 2546, 2592, 2648, 2710, 2767, 2736, 2749, 2757, 2757, 2747, 2756, 2732, 2745, 2727, 2692, 2674, 2668, 2712, 2715, 2693, 2662, 2671,
    2670, 2693, 2683, 2727, 2738, 2720, 2702, 2663, 2656, 2638, 2616, 2604, 2552, 2557, 2597, 2622, 2628, 2693, 2747, 2757, 2757, 2745, 2757, 2752, 2728,
    2730, 2727, 2724, 2720, 2734, 2740, 2740, 2719, 2731, 2727, 2711, 2723, 2738, 2719, 2727, 2735, 2730, 2669, 2690, 2707, 2713, 2733, 2734, 2738, 2722,
    2692, 2722, 2693, 2677, 2665, 2657, 2647, 2668, 2631, 2654, 2604, 2682, 2699, 2691, 2669, 2604, 2592, 2601, 2610, 2642, 2667, 2692, 2726, 2713, 2675
];

const rect = (cls, x, y, w, h) => {
    const el = document.createElementNS("http://www.w3.org/2000/svg", "rect");
    el.setAttribute("class", cls);
    el.setAttribute("x", x);
    el.setAttribute("y", y);
    el.setAttribute("width", w);
    el.setAttribute("height", h);
    plot.appendChild(el);
};

const line = (cls, values) => {
    const el = document.createElementNS("http://www.w3.org/2000/svg", "polyline");
    el.setAttribute("class", `line ${cls}`);
    el.setAttribute("points", values.map((y, i) => `${xAt(i).toFixed(1)},${y}`).join(" "));
    plot.appendChild(el);
};

const volumeMa = (n) => volumes.map((_, i) => {
    let sum = 0;
    for (let s = i - n + 1; s <= i; s++) {
        sum += s < 0 ? 8 : volumes[s];
    }
    return 2206.5 - sum / n;
});

candles.forEach(([cls, high, top, bottom, low], i) => {
    const x = xAt(i);
    rect(cls, x - 1.8, high, 3.6, low - high);
    rect(cls, x - 2.8, top, 5.6, bottom - top);
    rect(cls, x - 3, 2206.5 - volumes[i], 6, volumes[i]);
});

line("c1", dif);
line("c2", dea);

macd.forEach((value, i) => {
    const x = xAt(i);
    const cls = value > 0 ? "up" : "down";
    const h = Math.abs(value);
    const y = value > 0 ? 2295 - h : 2293.5;
    if (macdStyle[i] === "H") {
        rect(`hollow ${cls}`, x - 3.2, y - 0.5, 6.4, h + 1);
    } else {
        rect(cls, x - 2.4, y, 4.8, h);
    }
});

line("c1", ma3);
line("c2", ma7);
line("c3", ma21);
line("c1", volumeMa(5));
line("c3", volumeMa(10));
line("c1", k);
line("c2", d);
line("c3", j);
```
